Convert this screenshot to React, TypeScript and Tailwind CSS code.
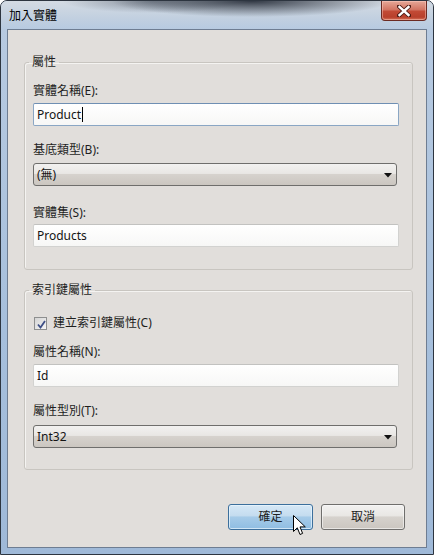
import React from "react";

const font = { fontFamily: '"Noto Sans", "Noto Sans CJK TC", sans-serif' };

function TextBox({ value, focused }: { value: string; focused?: boolean }) {
  return (
    <div
      className={`h-[23px] w-[366px] rounded-[2px] border bg-[linear-gradient(to_bottom,#ffffff,#f7f7f6)] pl-[3px] flex items-center text-[12px] text-[#141414] ${
        focused ? "border-[#8aa6c4] border-t-[#6f8fb3]" : "border-[#d2d2d0] border-t-[#c2c2c0]"
      }`}
    >
      <span>{value}</span>
      {focused && <span className="ml-[1px] inline-block h-[15px] w-[1px] bg-black" />}
    </div>
  );
}

function Combo({ value }: { value: string }) {
  return (
    <div className="relative h-[23px] w-[364px] rounded-[3px] border border-[#6f6e6c] bg-[linear-gradient(to_bottom,#f2f1f0_0%,#e9e7e4_45%,#d6d2cd_50%,#cbc6c0_100%)] pl-[3px] flex items-center text-[12px] text-[#141414]">
      <span>{value}</span>
      <svg className="absolute right-[4px] top-[9px]" width="8" height="5" viewBox="0 0 8 5">
        <path d="M0 0 H8 L4 4.5 Z" fill="#111" />
      </svg>
    </div>
  );
}

function Label({ text, className = "" }: { text: string; className?: string }) {
  return <div className={`h-[16px] leading-[16px] text-[12px] text-[#1e1e1e] ${className}`}>{text}</div>;
}

function Group({ title, children, className = "" }: { title: string; children: React.ReactNode; className?: string }) {
  return (
    <fieldset
      className={`w-[389px] rounded-[3px] border border-[#c8c5c0] shadow-[inset_1px_1px_0_#f4f3f1] pl-[8px] ${className}`}
    >
      <legend className="-ml-[4px] px-[3px] h-[16px] leading-[16px] text-[12px] text-[#1e1e1e]">{title}</legend>
      {children}
    </fieldset>
  );
}

export default function App() {
  return (
    <div
      className="relative w-[434px] h-[555px] overflow-hidden rounded-t-[7px] border border-[#2d3540] bg-[linear-gradient(to_bottom,#b9cbe1,#a6bfdc_60%,#9fb9d8)] flex flex-col"
      style={font}
    >
      {/* title bar */}
      <div className="relative h-[28px] flex items-start bg-[image:radial-gradient(ellipse_140px_16px_at_58%_0%,rgba(35,42,54,0.92),rgba(35,42,54,0)),radial-gradient(ellipse_90px_12px_at_35%_0%,rgba(70,80,95,0.55),rgba(70,80,95,0)),linear-gradient(to_bottom,#d4dbe3,#c2d0e0_60%,#b7cae1)]">
        <div className="ml-[8px] mt-[7px] text-[12px] leading-[16px] text-black">加入實體</div>
        <div className="ml-auto mr-[6px] h-[20px] w-[46px] rounded-b-[4px] border border-t-0 border-[#6b2a22] bg-[linear-gradient(to_bottom,#e6a898_0%,#d27563_45%,#c24a35_55%,#b8402b_85%,#d6735a_100%)] flex items-center justify-center shadow-[inset_0_0_0_1px_rgba(255,210,200,0.45)]">
          <svg width="14" height="12" viewBox="0 0 14 12">
            <path d="M2 1.5 L12 10.5 M12 1.5 L2 10.5" stroke="#4a1a14" strokeWidth="4.2" strokeLinecap="round" />
            <path d="M2.5 2 L11.5 10 M11.5 2 L2.5 10" stroke="#ffffff" strokeWidth="2.4" strokeLinecap="square" />
          </svg>
        </div>
      </div>

      {/* client area */}
      <div className="mx-[6px] mb-[6px] flex-1 border border-[#6e7d92] bg-[#e1dedb] pt-[24px] pl-[16px] flex flex-col text-[12px]">
        <Group title="屬性" className="pb-[22px]">
          <Label text="實體名稱(E):" className="mt-[13px]" />
          <div className="mt-[4px]">
            <TextBox value="Product" focused />
          </div>
          <Label text="基底類型(B):" className="mt-[16px]" />
          <div className="mt-[5px]">
            <Combo value="(無)" />
          </div>
          <Label text="實體集(S):" className="mt-[19px]" />
          <div className="mt-[3px]">
            <TextBox value="Products" />
          </div>
        </Group>

        <Group title="索引鍵屬性" className="mt-[12px] pb-[21px]">
          <div className="mt-[17px] h-[16px] flex items-center gap-[6px] pl-[1px]">
            <div className="h-[13px] w-[13px] border border-[#8e8f8f] bg-[linear-gradient(135deg,#d4d4d4,#f6f6f6)] p-[1px]">
              <svg width="9" height="9" viewBox="0 0 9 9" className="block ml-[1px] mt-[1px]">
                <path d="M1 4.5 L3.5 7.5 L8 1" stroke="#3e4f86" strokeWidth="1.8" fill="none" />
              </svg>
            </div>
            <span className="text-[12px] leading-[16px] text-[#1e1e1e]">建立索引鍵屬性(C)</span>
          </div>
          <Label text="屬性名稱(N):" className="mt-[13px]" />
          <div className="mt-[4px]">
            <TextBox value="Id" />
          </div>
          <Label text="屬性型別(T):" className="mt-[16px]" />
          <div className="mt-[6px]">
            <Combo value="Int32" />
          </div>
        </Group>

        <div className="mt-[34px] mr-[21px] flex justify-end gap-[8px]">
          <div className="h-[26px] w-[85px] rounded-[3px] border border-[#3c6f9c] bg-[linear-gradient(to_bottom,#d6e8f6_0%,#c4dcef_45%,#a6cbe8_50%,#8fbde2_100%)] shadow-[inset_0_0_0_1px_rgba(235,246,253,0.7)] flex items-center justify-center text-[12px] text-[#1e1e1e]">
            確定
          </div>
          <div className="h-[26px] w-[84px] rounded-[3px] border border-[#6f6e6c] bg-[linear-gradient(to_bottom,#f2f1f0_0%,#e9e7e4_45%,#d6d2cd_50%,#cbc6c0_100%)] shadow-[inset_0_0_0_1px_rgba(250,250,250,0.6)] flex items-center justify-center text-[12px] text-[#1e1e1e]">
            取消
          </div>
        </div>
      </div>

      {/* mouse pointer */}
      <svg className="absolute left-[292px] top-[514px]" width="14" height="22" viewBox="0 0 14 22">
        <path d="M0.5 0.5 L0.5 16.5 L4.3 12.8 L7 19.5 L9.6 18.4 L7 11.9 L12.3 11.9 Z" fill="#fff" stroke="#000" strokeWidth="1" strokeLinejoin="round" />
      </svg>
    </div>
  );
}
